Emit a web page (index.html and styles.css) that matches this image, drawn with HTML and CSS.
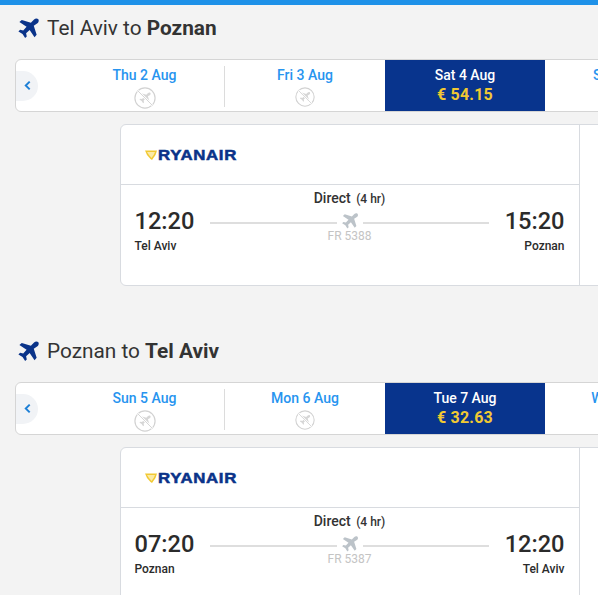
FILE: index.html
```html
<!DOCTYPE html>
<html lang="en">
<head>
<meta charset="utf-8">
<title>Flights</title>
<link rel="stylesheet" href="styles.css">
</head>
<body>
<svg class="defs" width="0" height="0" aria-hidden="true">
  <symbol id="plane" viewBox="0 0 24 24"><path d="M22 2.200c-1-1-3-.8-4.200.4L14.500 6 5 3 2.500 5.200 10 10.300 6.500 14l-3.300-.7L1.500 15l4.300 2.700L8.500 22l1.700-1.700-.7-3.300 3.700-3.500 5.100 7.500 2.200-2.500-3-9.500L21.700 6.200c1.200-1.200 1.300-3 .3-4z"/></symbol>
  <symbol id="noflight" viewBox="0 0 24 24">
    <circle cx="12" cy="12" r="11" fill="none" stroke="#d2d2d2" stroke-width="1.300"/>
    <path fill="#d6d6d6" transform="translate(5 5) scale(.58)" d="M22 2.200c-1-1-3-.8-4.200.4L14.500 6 5 3 2.500 5.200 10 10.300 6.500 14l-3.300-.7L1.500 15l4.300 2.700L8.500 22l1.700-1.700-.7-3.300 3.700-3.500 5.100 7.500 2.200-2.500-3-9.500L21.700 6.200c1.200-1.200 1.300-3 .3-4z"/>
    <path d="M4.200 4.200 19.800 19.800" stroke="#fff" stroke-width="2.400"/>
    <path d="M4.200 4.200 19.800 19.800" stroke="#d2d2d2" stroke-width="1"/>
  </symbol>
  <symbol id="harp" viewBox="0 0 12 10"><path fill="#f1c933" d="M0 .5h12L10.500 5 7 10 5.500 9 2 5z"/><path fill="#fbeaa6" d="M2 2h8L8.800 4.800 6.500 8 4 5z"/></symbol>
</svg>

<div class="topbar"></div>

<section class="journey journey-out">
  <h2 class="route"><svg class="route-icon"><use href="#plane"/></svg><span>Tel Aviv to <b>Poznan</b></span></h2>
  <div class="strip">
    <button class="nav" aria-label="Earlier"><svg viewBox="0 0 8 12" width="7" height="11"><path d="M6.500 1.500 2 6l4.500 4.500" fill="none" stroke="#1c7fd6" stroke-width="2.200"/></svg></button>
    <div class="day"><div class="date">Thu 2 Aug</div><svg class="none"><use href="#noflight"/></svg></div>
    <div class="day sep"><div class="date">Fri 3 Aug</div><svg class="none"><use href="#noflight"/></svg></div>
    <div class="day active"><div class="date">Sat 4 Aug</div><div class="price">€ 54.15</div></div>
    <div class="day"><div class="date">Sun 5 Aug</div></div>
  </div>
  <article class="card">
    <div class="main">
      <div class="airline"><svg class="harp"><use href="#harp"/></svg><span class="logo">RYANAIR</span></div>
      <div class="times">
        <div class="end"><div class="time">12:20</div><div class="city">Tel Aviv</div></div>
        <div class="mid">
          <div class="stops">Direct <small>(4 hr)</small></div>
          <div class="line"><svg class="line-plane" viewBox="0 0 26 18"><use href="#plane" x="4" y="0" width="18" height="18"/></svg></div>
          <div class="fno">FR 5388</div>
        </div>
        <div class="end right"><div class="time">15:20</div><div class="city">Poznan</div></div>
      </div>
    </div>
  </article>
</section>

<section class="journey journey-back">
  <h2 class="route"><svg class="route-icon"><use href="#plane"/></svg><span>Poznan to <b>Tel Aviv</b></span></h2>
  <div class="strip">
    <button class="nav" aria-label="Earlier"><svg viewBox="0 0 8 12" width="7" height="11"><path d="M6.500 1.500 2 6l4.500 4.500" fill="none" stroke="#1c7fd6" stroke-width="2.200"/></svg></button>
    <div class="day"><div class="date">Sun 5 Aug</div><svg class="none"><use href="#noflight"/></svg></div>
    <div class="day sep"><div class="date">Mon 6 Aug</div><svg class="none"><use href="#noflight"/></svg></div>
    <div class="day active"><div class="date">Tue 7 Aug</div><div class="price">€ 32.63</div></div>
    <div class="day"><div class="date">Wed 8 Aug</div></div>
  </div>
  <article class="card">
    <div class="main">
      <div class="airline"><svg class="harp"><use href="#harp"/></svg><span class="logo">RYANAIR</span></div>
      <div class="times">
        <div class="end"><div class="time">07:20</div><div class="city">Poznan</div></div>
        <div class="mid">
          <div class="stops">Direct <small>(4 hr)</small></div>
          <div class="line"><svg class="line-plane" viewBox="0 0 26 18"><use href="#plane" x="4" y="0" width="18" height="18"/></svg></div>
          <div class="fno">FR 5387</div>
        </div>
        <div class="end right"><div class="time">12:20</div><div class="city">Tel Aviv</div></div>
      </div>
    </div>
  </article>
</section>
</body>
</html>
```
FILE: styles.css
```css
* { box-sizing: border-box; }
html, body { margin: 0; height: 595px; overflow: hidden; }
body { width: 598px; background: #f3f3f3; font-family: Roboto, "Liberation Sans", sans-serif; color: #2b2b2b; }
.defs { display: block; height: 0; }
.topbar { height: 5px; background: #1e91e8; }

.journey { padding-left: 15px; width: 800px; }
.journey-back { margin-top: 42px; }

.route { display: flex; align-items: center; gap: 7px; height: 46px; margin: 0; padding: 0 0 0 2px; font-size: 20.8px; font-weight: 400; color: #333; }
.route b { font-weight: 700; }
.route-icon { width: 23px; height: 23px; fill: #0a3389; flex: none; }

.strip { display: flex; height: 53px; margin-top: 8px; width: 780px; background: #fff; border: 1px solid #d5d5d5; border-radius: 6px; overflow: hidden; }
.nav { flex: none; align-self: center; width: 22px; height: 30px; margin-right: 27px; padding: 0; border: 0; border-radius: 0 15px 15px 0; background: #f1f3f6; display: flex; align-items: center; justify-content: center; }
.day { flex: none; width: 160px; display: flex; flex-direction: column; align-items: center; padding-top: 7px; }
.day:first-of-type { width: 159px; }
.sep { width: 161px; border-left: 1px solid #dcdcdc; margin: 6px 0 5px; padding-top: 1px; height: 41px; }
.date { font-size: 14px; font-weight: 500; line-height: 17px; color: #2794ef; }
.none { width: 22px; height: 22px; margin-top: 3px; }
.active { background: #08348d; }
.active .date { color: #fff; }
.price { font-size: 16px; font-weight: 700; line-height: 20px; margin-top: 1px; color: #f1c933; letter-spacing: .2px; }

.card { margin: 12px 0 0 105px; width: 600px; height: 162px; background: #fff; border: 1px solid #d8dbe0; border-radius: 6px; }
.main { width: 459px; height: 100%; border-right: 1px solid #d8dbe0; }
.airline { display: flex; align-items: center; height: 60px; padding: 0 0 0 24px; border-bottom: 1px solid #d8dbe0; }
.harp { width: 12px; height: 10px; flex: none; }
.logo { display: inline-block; margin-left: 1px; font-family: "Liberation Sans", sans-serif; font-weight: 700; font-size: 14px; letter-spacing: .55px; color: #0a3389; -webkit-text-stroke: .5px #0a3389; transform: scaleX(1.2); transform-origin: left center; }

.times { display: flex; padding: 5px 14.500px 0 13.500px; }
.end { width: 60px; flex: none; padding-top: 16px; }
.right { text-align: right; }
.time { font-size: 23.6px; font-weight: 500; line-height: 30px; color: #2b2b2b; }
.city { font-size: 12px; font-weight: 500; line-height: 14px; margin-top: 3px; }
.mid { flex: 1; padding: 0 15.500px; text-align: center; }
.stops { font-size: 14px; font-weight: 500; line-height: 16px; color: #333; }
.stops small { font-size: 12px; margin-left: 2px; }
.line { height: 2px; margin-top: 15px; background: #dedede; display: flex; justify-content: center; align-items: center; }
.line-plane { width: 26px; height: 18px; flex: none; fill: #bcc3c9; background: #fff; transform: translateY(-2px); }
.fno { font-size: 12px; line-height: 14px; margin-top: 5px; color: #c4c4c4; }
```
